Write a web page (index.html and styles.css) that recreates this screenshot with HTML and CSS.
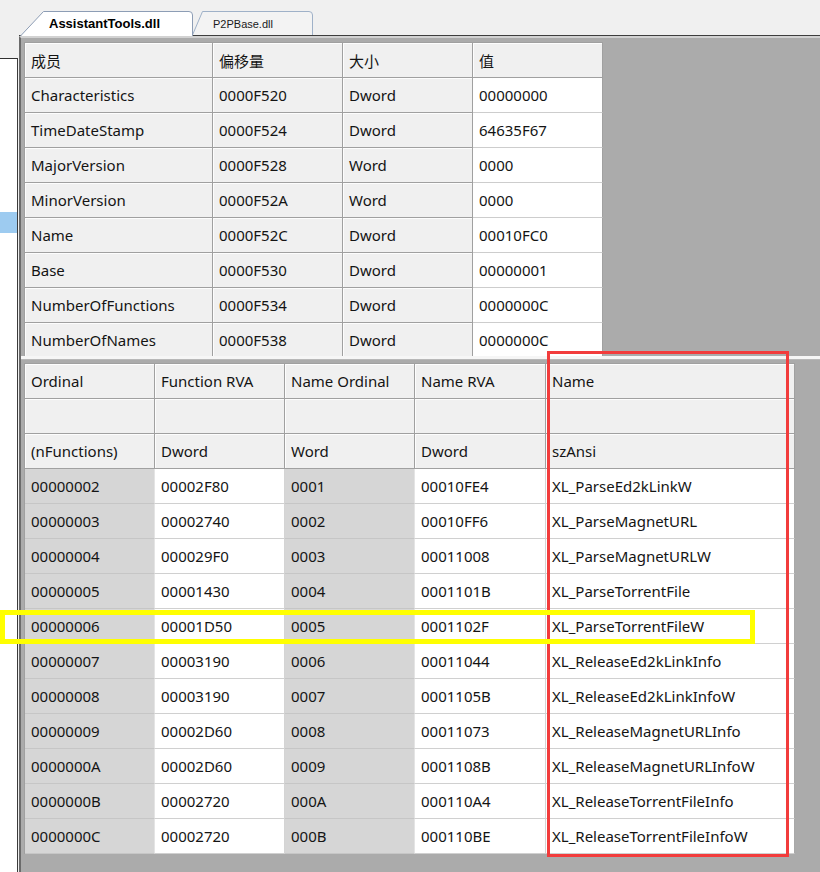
FILE: index.html
```html
<!DOCTYPE html>
<html lang="zh">
<head>
<meta charset="utf-8">
<title>Export Directory</title>
<link rel="stylesheet" href="styles.css">
</head>
<body>
<div class="left">
  <div class="tree"><div class="sel"></div></div>
</div>
<div class="right">
  <div class="tabs">
    <div class="tab active">
      <svg class="tabshape" width="173" height="25" viewBox="0 0 173 25"><path d="M0.5 25 L23.5 0.5 H169 Q172.5 0.5 172.5 4 V25" fill="#ffffff" stroke="#8d9db5"/></svg>
      <span class="tablabel">AssistantTools.dll</span>
    </div>
    <div class="tab">
      <svg class="tabshape" width="121" height="24" viewBox="0 0 121 24"><path d="M0.5 24 L10.5 0.5 H117 Q120.5 0.5 120.5 4 V24" fill="#f3f3f3" stroke="#9fb1c8"/></svg>
      <span class="tablabel">P2PBase.dll</span>
    </div>
  </div>
  <div class="panel">
    <div class="toppane">
      <div class="grid g1">
        <div class="c">成员</div><div class="c">偏移量</div><div class="c">大小</div><div class="c">值</div>
        <div class="c">Characteristics</div><div class="c">0000F520</div><div class="c">Dword</div><div class="c v">00000000</div>
        <div class="c">TimeDateStamp</div><div class="c">0000F524</div><div class="c">Dword</div><div class="c v">64635F67</div>
        <div class="c">MajorVersion</div><div class="c">0000F528</div><div class="c">Word</div><div class="c v">0000</div>
        <div class="c">MinorVersion</div><div class="c">0000F52A</div><div class="c">Word</div><div class="c v">0000</div>
        <div class="c">Name</div><div class="c">0000F52C</div><div class="c">Dword</div><div class="c v">00010FC0</div>
        <div class="c">Base</div><div class="c">0000F530</div><div class="c">Dword</div><div class="c v">00000001</div>
        <div class="c">NumberOfFunctions</div><div class="c">0000F534</div><div class="c">Dword</div><div class="c v">0000000C</div>
        <div class="c">NumberOfNames</div><div class="c">0000F538</div><div class="c">Dword</div><div class="c v">0000000C</div>
      </div>
    </div>
    <div class="splitter"></div>
    <div class="bottompane">
      <div class="grid g2">
        <div class="c">Ordinal</div><div class="c">Function RVA</div><div class="c">Name Ordinal</div><div class="c">Name RVA</div><div class="c">Name</div>
        <div class="c"></div><div class="c"></div><div class="c"></div><div class="c"></div><div class="c"></div>
        <div class="c">(nFunctions)</div><div class="c">Dword</div><div class="c">Word</div><div class="c">Dword</div><div class="c">szAnsi</div>

        <div class="c d">00000002</div><div class="c w">00002F80</div><div class="c d">0001</div><div class="c w">00010FE4</div><div class="c w">XL_ParseEd2kLinkW</div>
        <div class="c d">00000003</div><div class="c w">00002740</div><div class="c d">0002</div><div class="c w">00010FF6</div><div class="c w">XL_ParseMagnetURL</div>
        <div class="c d">00000004</div><div class="c w">000029F0</div><div class="c d">0003</div><div class="c w">00011008</div><div class="c w">XL_ParseMagnetURLW</div>
        <div class="c d">00000005</div><div class="c w">00001430</div><div class="c d">0004</div><div class="c w">0001101B</div><div class="c w">XL_ParseTorrentFile</div>
        <div class="c d">00000006</div><div class="c w">00001D50</div><div class="c d">0005</div><div class="c w">0001102F</div><div class="c w">XL_ParseTorrentFileW</div>
        <div class="c d">00000007</div><div class="c w">00003190</div><div class="c d">0006</div><div class="c w">00011044</div><div class="c w">XL_ReleaseEd2kLinkInfo</div>
        <div class="c d">00000008</div><div class="c w">00003190</div><div class="c d">0007</div><div class="c w">0001105B</div><div class="c w">XL_ReleaseEd2kLinkInfoW</div>
        <div class="c d">00000009</div><div class="c w">00002D60</div><div class="c d">0008</div><div class="c w">00011073</div><div class="c w">XL_ReleaseMagnetURLInfo</div>
        <div class="c d">0000000A</div><div class="c w">00002D60</div><div class="c d">0009</div><div class="c w">0001108B</div><div class="c w">XL_ReleaseMagnetURLInfoW</div>
        <div class="c d">0000000B</div><div class="c w">00002720</div><div class="c d">000A</div><div class="c w">000110A4</div><div class="c w">XL_ReleaseTorrentFileInfo</div>
        <div class="c d">0000000C</div><div class="c w">00002720</div><div class="c d">000B</div><div class="c w">000110BE</div><div class="c w">XL_ReleaseTorrentFileInfoW</div>
      </div>
    </div>
  </div>
</div>
<div class="mark red"></div>
<div class="mark yellow"></div>
</body>
</html>
```

FILE: styles.css
```css
* { box-sizing: border-box; }

html, body {
  margin: 0;
  padding: 0;
}

body {
  position: relative;
  width: 820px;
  height: 872px;
  overflow: hidden;
  display: flex;
  background: #f0f0f0;
  font-family: "Noto Sans", "Noto Sans CJK SC", sans-serif;
  color: #141414;
}

/* left tree pane (mostly hidden) */
.left {
  width: 18px;
  margin-right: 1px;
  padding-top: 58px;
  display: flex;
  flex-direction: column;
}

.tree {
  flex: 1;
  background: #ffffff;
  border-top: 1px solid #303030;
  border-right: 1px solid #3c3c3c;
}

.sel {
  margin-top: 153px;
  height: 21px;
  background: #9dcbf0;
}

/* right side */
.right {
  flex: 1;
  display: flex;
  flex-direction: column;
  min-width: 0;
}

.tabs {
  height: 36px;
  display: flex;
  align-items: flex-end;
  padding-left: 1px;
  border-bottom: 1px solid #3e3e3e;
}

.tab {
  position: relative;
  width: 121px;
  height: 24px;
  margin-left: -1px;
  font-family: "Liberation Sans", Arial, sans-serif;
  font-size: 11px;
  color: #1a1a1a;
}

.tab.active {
  width: 173px;
  height: 25px;
  margin-left: 0;
  margin-bottom: -1px;
  z-index: 1;
  font-size: 13px;
  font-weight: bold;
  color: #000;
}

.tabshape {
  position: absolute;
  left: 0;
  top: 0;
  display: block;
}

.tablabel {
  position: relative;
  display: block;
  padding-left: 21px;
  line-height: 26px;
  white-space: nowrap;
}

.tab.active .tablabel {
  padding-left: 29px;
  line-height: 25px;
}

/* main panel */
.panel {
  flex: 1;
  display: flex;
  flex-direction: column;
  background: #ababab;
  border-top: 2px solid #d2d2d2;
  border-left: 2px solid #6b6b6b;
  padding: 4px 0 0 3px;
  overflow: hidden;
}

.toppane {
  height: 314px;
  overflow: hidden;
  flex-shrink: 0;
}

.splitter {
  height: 4px;
  margin-left: -3px;
  flex-shrink: 0;
  background: #f6f6f6;
  border-bottom: 1px solid #b8b8b8;
}

.bottompane {
  flex: 1;
  padding-top: 3px;
}

.grid {
  display: grid;
  width: max-content;
  border-top: 1px solid #a0a0a0;
  border-left: 1px solid #a0a0a0;
  font-size: 15px;
}

.g1 { grid-template-columns: 188px 130px 130px 130px; }
.g2 { grid-template-columns: 130px 130px 130px 131px 249px; }

.c {
  height: 35px;
  display: flex;
  align-items: center;
  padding: 0 0 0 6px;
  white-space: nowrap;
  overflow: hidden;
  background: #f0f0f0;
  border-right: 1px solid #a0a0a0;
  border-bottom: 1px solid #a0a0a0;
  box-shadow: inset 1px 1px 0 #fdfdfd;
}

.c.v {
  background: #ffffff;
  box-shadow: none;
  border-bottom-color: #cdcdcd;
}

.c.d {
  background: #d6d6d6;
  box-shadow: none;
  border-right-color: #e4e4e4;
  border-bottom-color: #c6c6c6;
}

.c.w {
  background: #ffffff;
  box-shadow: none;
  border-right-color: #d4d4d4;
  border-bottom-color: #d0d0d0;
}

.g2 .c.w:nth-child(5n) {
  border-right-color: #a8a8a8;
}

/* annotation boxes */
.mark {
  position: absolute;
  pointer-events: none;
}

.mark.red {
  left: 547px;
  top: 351px;
  width: 242px;
  height: 506px;
  border: 3px solid #f23c3c;
}

.mark.yellow {
  left: 0;
  top: 610px;
  width: 755px;
  height: 34px;
  border: 5px solid #ffff00;
}
```
